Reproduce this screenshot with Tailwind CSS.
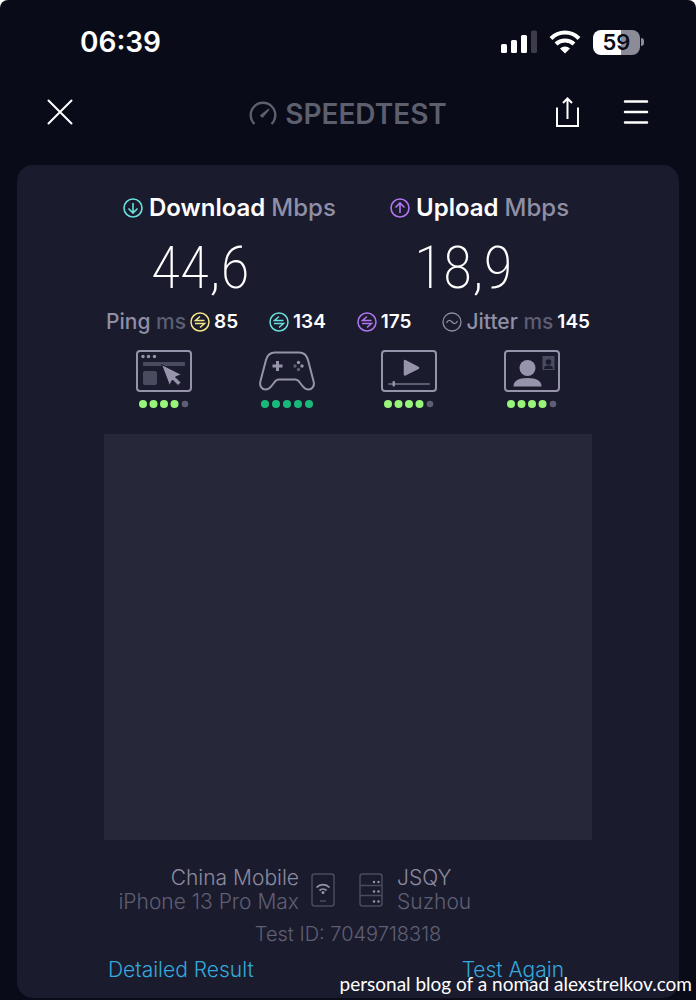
<!DOCTYPE html>
<html lang="en">
<head>
  <meta charset="UTF-8">
  <meta name="viewport" content="width=device-width, initial-scale=1.0">
  <title>Speedtest Result</title>
  <script src="https://cdn.jsdelivr.net/npm/@tailwindcss/browser@4"></script>
</head>
<body class="bg-white font-['Inter',sans-serif]">
  <!-- shared icons -->
  <svg class="hidden">
    <symbol id="swap" viewBox="0 0 20 20">
      <circle cx="10" cy="10" r="9"/><path d="M14.5 8.5H5.5L10 4.500M5 11.5h9.500L10 15.5"/>
    </symbol>
    <symbol id="dots4" viewBox="0 0 50 8">
      <circle cx="4" cy="4" r="4"/><circle cx="14.5" cy="4" r="4"/><circle cx="25" cy="4" r="4"/><circle cx="35.5" cy="4" r="4"/><circle cx="46" cy="4" r="3.3" fill="#5d5e72"/>
    </symbol>
  </svg>

  <div class="relative min-h-screen overflow-hidden rounded-t-lg bg-[#090b19] text-white">

    <!-- STATUS BAR -->
    <div class="flex h-20 items-center justify-between pl-20 pr-13 pt-1">
      <div class="text-[28px] font-semibold">06:39</div>
      <div class="flex items-center gap-3">
        <svg class="h-6 w-9" viewBox="0 0 36 24" fill="#fff">
          <rect x="0" y="14" width="6" height="9" rx="1.5"/>
          <rect x="10" y="10" width="6" height="13" rx="1.5"/>
          <rect x="20" y="5" width="6" height="18" rx="1.5"/>
          <rect x="30" y="0.5" width="6" height="22.5" rx="1.5" fill="#3c3d48"/>
        </svg>
        <svg class="h-6 w-8" viewBox="0 0 32 24" fill="none" stroke="#fff" stroke-width="4">
          <path d="M2 8.5a19.5 19.5 0 0 1 28 0"/>
          <path d="M7 14a13 13 0 0 1 18 0"/>
          <path d="M11 18.5a7.5 7.5 0 0 1 10 0L16 23.5z" fill="#fff" stroke="none"/>
        </svg>
        <div class="flex items-center gap-px">
          <div class="flex h-[25px] w-[47px] items-center justify-center rounded-lg bg-linear-to-r from-white from-60% to-[#8c8c98] to-60% text-[22px] font-semibold text-[#090b19]">59</div>
          <div class="h-2 w-[3px] rounded-r-full bg-[#8c8c98]"></div>
        </div>
      </div>
    </div>

    <!-- NAV BAR -->
    <div class="grid h-[85px] grid-cols-[1fr_auto_1fr] items-start px-11 pt-4">
      <button type="button" aria-label="Close" class="h-8 w-8 justify-self-start">
        <svg class="h-8 w-8" viewBox="0 0 32 32" fill="none" stroke="#fff" stroke-width="2" stroke-linecap="round">
          <path d="M4.5 4.5l23 23M27.5 4.5l-23 23"/>
        </svg>
      </button>
      <div class="flex h-9 items-center gap-2 text-[#5d5e6e]">
        <svg class="h-7 w-7" viewBox="0 0 28 28" fill="none" stroke="currentColor" stroke-width="2.4">
          <path d="M5.5 24a12.3 12.3 0 1 1 17 0"/>
          <path d="M19.5 8.5l1 1.2-7 8.3-2.8-2.5z" fill="currentColor" stroke="none"/>
        </svg>
        <span class="text-[28px] font-semibold">SPEEDTEST</span>
      </div>
      <div class="flex gap-9 justify-self-end">
        <button type="button" aria-label="Share" class="h-8 w-8">
          <svg class="h-8 w-8" viewBox="0 0 32 32" fill="none" stroke="#fff" stroke-width="2">
            <path d="M5 11.5V30h21V11.5M15.5 23V2.5M11 7l4.5-4.5L20 7"/>
          </svg>
        </button>
        <button type="button" aria-label="Menu" class="h-8 w-8">
          <svg class="h-8 w-8" viewBox="0 0 32 32" fill="none" stroke="#fff" stroke-width="2.5" stroke-linecap="round">
            <path d="M5 5.5h22M5 16h22M5 26.5h22"/>
          </svg>
        </button>
      </div>
    </div>

    <!-- RESULT CARD -->
    <main class="mx-[17px] rounded-2xl bg-[#1b1b2e] px-[87px] pb-4 pt-[25px]">
      <div class="grid grid-cols-[267px_1fr]">
        <section class="pl-[19px]">
          <h2 class="flex h-9 items-center gap-1.5 text-2xl font-semibold">
            <svg class="h-5 w-5 shrink-0" viewBox="0 0 20 20" fill="none" stroke="#6ae0dc" stroke-width="1.6">
              <circle cx="10" cy="10" r="9"/><path d="M10 5v9.5M5.5 10.5L10 15l4.5-4.5"/>
            </svg>
            <span>Download <span class="font-medium text-[#8f8fa5]">Mbps</span></span>
          </h2>
          <p class="pl-7 font-['Roboto_Condensed',Roboto,sans-serif] text-[60px]/[84px] font-extralight">44,6</p>
        </section>
        <section class="pl-[19px]">
          <h2 class="flex h-9 items-center gap-1.5 text-2xl font-semibold">
            <svg class="h-5 w-5 shrink-0" viewBox="0 0 20 20" fill="none" stroke="#b376f0" stroke-width="1.6">
              <circle cx="10" cy="10" r="9"/><path d="M10 15V5.5M5.5 9.5L10 5l4.5 4.5"/>
            </svg>
            <span>Upload <span class="font-medium text-[#8f8fa5]">Mbps</span></span>
          </h2>
          <p class="pl-6 font-['Roboto_Condensed',Roboto,sans-serif] text-[60px]/[84px] font-extralight">18,9</p>
        </section>
      </div>

      <!-- latency -->
      <div class="flex h-6 items-center justify-between px-0.5 text-[19px] font-semibold">
        <div class="flex items-center gap-1">
          <span class="text-[21px] font-medium text-[#8f8fa5]">Ping <span class="text-[#5d5e72]">ms</span></span>
          <svg class="h-5 w-5" fill="none" stroke="#f5e889" stroke-width="1.5"><use href="#swap"/></svg>
          <span>85</span>
        </div>
        <div class="flex items-center gap-1">
          <svg class="h-5 w-5" fill="none" stroke="#6ae0dc" stroke-width="1.5"><use href="#swap"/></svg>
          <span>134</span>
        </div>
        <div class="flex items-center gap-1">
          <svg class="h-5 w-5" fill="none" stroke="#b376f0" stroke-width="1.5"><use href="#swap"/></svg>
          <span>175</span>
        </div>
        <div class="flex items-center gap-1">
          <svg class="h-5 w-5" viewBox="0 0 20 20" fill="none" stroke="#8f8fa5" stroke-width="1.3">
            <circle cx="10" cy="10" r="9"/><path d="M4.5 11c2-4 4-2.5 5.5-1s3.5 3 5.5-1"/>
          </svg>
          <span class="text-[21px] font-medium text-[#8f8fa5]">Jitter <span class="text-[#5d5e72]">ms</span></span>
          <span>145</span>
        </div>
      </div>

      <!-- experience ratings -->
      <div class="flex justify-between px-8 pt-4">
        <div class="flex flex-col items-center gap-2">
          <svg class="h-[42px] w-14" viewBox="0 0 56 42" fill="#9594aa">
            <rect x="1" y="1" width="54" height="40" rx="3" fill="none" stroke="#9594aa" stroke-width="2"/>
            <circle cx="7" cy="6.5" r="1.7"/><circle cx="12.5" cy="6.5" r="1.7"/><circle cx="18.5" cy="6.5" r="1.7"/>
            <rect x="7" y="12" width="42" height="4" rx="1" fill="#4b4b60"/>
            <rect x="7" y="21" width="14" height="14" rx="2" fill="#4b4b60"/>
            <path d="M25.5 14.5L45.5 24.5L39.5 27L45 32.5L42 35.5L36.5 30L33.5 35.5Z" stroke="#1b1b2e"/>
          </svg>
          <svg class="h-2 w-[50px]" fill="#98f57a"><use href="#dots4"/></svg>
        </div>
        <div class="flex flex-col items-center gap-2">
          <svg class="h-[42px] w-14" viewBox="0 0 56 42" fill="#9594aa">
            <path d="M16 2.5H40C45 2.5 48 6 49 10L54.5 31C56 36 53 39.5 49.5 39.5C47 39.5 45 38 43.5 36L39.5 31C38.5 30 38 29.5 36.5 29.5H19.5C18 29.5 17.5 30 16.5 31L12.5 36C11 38 9 39.5 6.5 39.5C3 39.5 0 36 1.5 31L7 10C8 6 11 2.5 16 2.5Z" fill="none" stroke="#9594aa" stroke-width="2"/>
            <path d="M17 11h3v3.5h3.5v3h-3.5V21h-3v-3.5h-3.5v-3H17z"/>
            <circle cx="39.5" cy="12.5" r="1.7"/><circle cx="43" cy="16" r="1.7"/><circle cx="36" cy="16" r="1.7" fill="#5d5e72"/><circle cx="39.5" cy="19.5" r="1.7" fill="#5d5e72"/>
          </svg>
          <svg class="h-2 w-[52px]" viewBox="0 0 52 8" fill="#19b97c">
            <circle cx="4" cy="4" r="4"/><circle cx="15" cy="4" r="4"/><circle cx="26" cy="4" r="4"/><circle cx="37" cy="4" r="4"/><circle cx="48" cy="4" r="4"/>
          </svg>
        </div>
        <div class="flex flex-col items-center gap-2">
          <svg class="h-[42px] w-14" viewBox="0 0 56 42" fill="#9594aa">
            <rect x="1" y="1" width="54" height="40" rx="3" fill="none" stroke="#9594aa" stroke-width="2"/>
            <path d="M24 11L37 17.8L24 24.5Z" stroke="#9594aa" stroke-width="2.5" stroke-linejoin="round"/>
            <rect x="7" y="33" width="42" height="2" rx="1" fill="#5d5e72"/><rect x="11.5" y="31" width="2.5" height="5.5" rx="1"/>
          </svg>
          <svg class="h-2 w-[50px]" fill="#98f57a"><use href="#dots4"/></svg>
        </div>
        <div class="flex flex-col items-center gap-2">
          <svg class="h-[42px] w-14" viewBox="0 0 56 42" fill="#9594aa">
            <rect x="1" y="1" width="54" height="40" rx="3" fill="none" stroke="#9594aa" stroke-width="2"/>
            <circle cx="23.5" cy="18" r="8"/><path d="M9.5 36.5C9.5 31 14 28 23.5 28S37.5 31 37.5 36.5Z"/>
            <rect x="38.5" y="6" width="12" height="14" rx="0.5" fill="#4b4b60"/>
            <circle cx="44.5" cy="12" r="2.8" fill="#1b1b2e"/><path d="M40 19c0-3 2-3.5 4.5-3.5S49 16 49 19z" fill="#1b1b2e"/>
          </svg>
          <svg class="h-2 w-[50px]" fill="#98f57a"><use href="#dots4"/></svg>
        </div>
      </div>

      <!-- map area -->
      <div class="mt-[26px] aspect-[488/406] bg-[#27273a]"></div>

      <!-- connection -->
      <div class="mt-[26px] grid grid-cols-[195px_24px_24px_1fr] items-center text-[21px]/6 font-light text-[#5f5f73]">
        <div class="text-right">
          <div class="text-[#8b8ba0]">China Mobile</div>
          <div>iPhone 13 Pro Max</div>
        </div>
        <svg class="ml-3 h-[34px] w-6" viewBox="0 0 24 34" fill="none" stroke="#4b4b60" stroke-width="1.5">
          <rect x="1" y="1" width="22" height="32" rx="2.5"/>
          <path d="M9 28h6"/>
          <path d="M5.5 14.5a9 9 0 0 1 13 0M8.500 17.5a5 5 0 0 1 7 0" stroke="#9594aa" stroke-width="1.8"/>
          <circle cx="12" cy="19.5" r="1.5" fill="#9594aa" stroke="none"/>
        </svg>
        <svg class="ml-9 h-[34px] w-6" viewBox="0 0 24 34" fill="none" stroke="#4b4b60" stroke-width="1.5">
          <rect x="1" y="1" width="22" height="32" rx="2.5"/>
          <path d="M1 12.5h22M1 22.5h22"/>
          <g fill="#9594aa" stroke="none">
            <circle cx="15" cy="9" r="1.2"/><circle cx="19.5" cy="9" r="1.2"/>
            <circle cx="15" cy="18.5" r="1.2"/><circle cx="19.5" cy="18.5" r="1.2"/>
            <circle cx="15" cy="28.5" r="1.2"/><circle cx="19.5" cy="28.5" r="1.2"/>
          </g>
        </svg>
        <div class="pl-[50px]">
          <div class="text-[#8b8ba0]">JSQY</div>
          <div>Suzhou</div>
        </div>
      </div>
      <p class="mt-2 text-center text-xl/6 font-light text-[#5f5f73]">Test ID: 7049718318</p>
      <div class="mt-3 flex justify-between pl-1 pr-7 text-[21px]/6 font-light text-[#35a9dc]">
        <a href="#">Detailed Result</a>
        <a href="#">Test Again</a>
      </div>
    </main>

    <!-- watermark -->
    <p class="absolute bottom-0 right-1 font-['Lato',sans-serif] text-[19px]/8">personal blog of a nomad alexstrelkov.com</p>
  </div>
</body>
</html>
